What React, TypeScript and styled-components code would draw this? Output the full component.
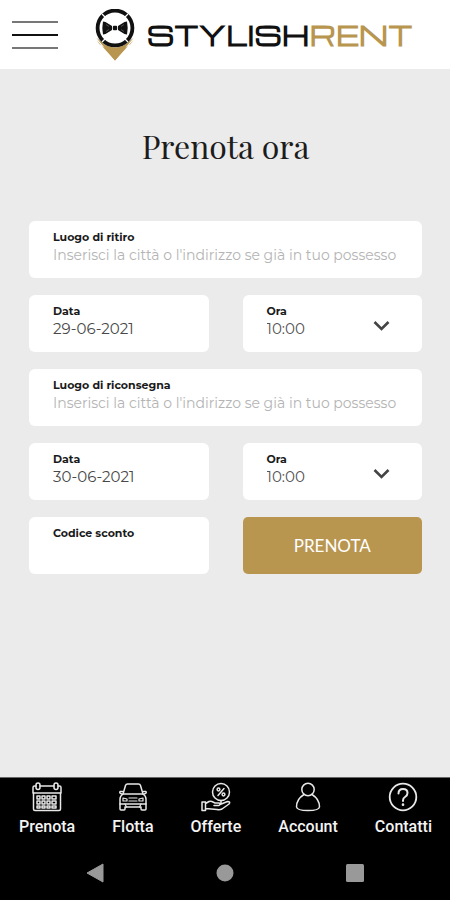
import React, { useId } from "react";
import styled, { createGlobalStyle } from "styled-components";

const GOLD = "#b99650";

const GlobalStyle = createGlobalStyle`
  *, *::before, *::after { box-sizing: border-box; }
  body { margin: 0; background: #ebebeb; font-family: Lato, sans-serif; }
  button, input, select { font: inherit; color: inherit; margin: 0; padding: 0; border: 0; background: none; }
  button { cursor: pointer; }
  svg { display: block; }
`;

const Page = styled.div`
  min-height: 100vh;
  display: flex;
  flex-direction: column;
`;

const Header = styled.header`
  display: flex;
  align-items: center;
  min-height: 69px;
  padding: 0 12px;
  gap: 37px;
  background: #fff;
`;

const MenuButton = styled.button`
  display: grid;
  gap: 11px;
  width: 46px;
  flex: none;
`;

const MenuLine = styled.span<{ $dark?: boolean }>`
  height: 2px;
  background: ${(p) => (p.$dark ? "#111" : "#777")};
`;

const Brand = styled.a`
  display: flex;
  align-items: center;
  gap: 12px;
  text-decoration: none;
`;

const Wordmark = styled.span`
  font: 700 26px/44px Michroma, "DejaVu Sans", sans-serif;
  color: #111;
`;

const WordmarkAccent = styled.span`
  color: ${GOLD};
`;

const Main = styled.main`
  flex: 1;
  padding: 54px 28px 40px 29px;
`;

const Title = styled.h1`
  margin: 0 0 52px;
  text-align: center;
  font: 400 32px/46px "Playfair Display", "Liberation Serif", serif;
  color: #1c1c1c;
`;

const Form = styled.form`
  display: grid;
  grid-template-columns: 1fr 1fr;
  gap: 17px 34px;
`;

const FieldBox = styled.div<{ $wide?: boolean }>`
  position: relative;
  display: flex;
  flex-direction: column;
  min-width: 0;
  min-height: 57px;
  padding: 8px 22px 12px 24px;
  border-radius: 6px;
  background: #fff;
  grid-column: ${(p) => (p.$wide ? "1 / -1" : "auto")};
`;

const Label = styled.label`
  font: 700 11px/16px Montserrat, "Open Sans", sans-serif;
  color: #1a1a1a;
`;

const TextInput = styled.input`
  width: 100%;
  height: 19px;
  font: 400 15px/19px Montserrat, Lato, sans-serif;
  color: #484848;
  outline: none;
  &::placeholder { font-size: 14px; color: #b4b4b4; opacity: 1; }
`;

const Select = styled.select`
  appearance: none;
  width: 100%;
  height: 19px;
  font: 400 15px/19px Montserrat, Lato, sans-serif;
  color: #555;
  outline: none;
`;

const Chevron = styled.svg`
  position: absolute;
  right: 32px;
  top: 25px;
  pointer-events: none;
`;

const Submit = styled.button`
  min-height: 57px;
  border-radius: 5px;
  background: ${GOLD};
  color: #fff;
  font-size: 17px;
`;

const Footer = styled.footer`
  background: #000;
  border-top: 1px solid #666;
`;

const Tabs = styled.nav`
  display: flex;
  justify-content: space-between;
  padding: 4px 18px 0 19px;
`;

const Tab = styled.a`
  display: flex;
  flex-direction: column;
  align-items: center;
  gap: 5px;
  font: 500 16px/20px Roboto, sans-serif;
  color: #f4f4f4;
  text-decoration: none;
`;

const SystemBar = styled.div`
  display: grid;
  grid-template-columns: repeat(3, 1fr);
  padding: 26px 30px 17px;
`;

const SystemButton = styled.button`
  display: flex;
  justify-content: center;
`;

function LogoMark() {
  return (
    <svg width="40" height="52" viewBox="0 0 40 52" aria-hidden="true">
      <path d="M1.500 29 Q20 44 38.500 29 L20 51.500 Z" fill={GOLD} />
      <circle cx="20" cy="19" r="19.500" fill="#fff" />
      <path d="M1.500 31 Q6 40 20 41 Q34 40 38.500 31 L20 51.500 Z" fill={GOLD} />
      <circle cx="20" cy="19" r="17.400" fill="none" stroke="#111" strokeWidth="3.800" />
      <path d="M7 5l3 3M33 5l-3 3M7 33l3-3M33 33l-3-3" stroke="#fff" strokeWidth="1.300" />
      <path d="M8 12.500 L10.500 13 L17 17 V21 L10.500 25 L8 25.500 Q6.600 19 8 12.500Z M32 12.500 L29.500 13 L23 17 V21 L29.500 25 L32 25.500 Q33.400 19 32 12.500Z" fill="#111" />
      <rect x="17.800" y="16.700" width="4.400" height="4.600" rx="1.200" fill="#111" />
      <path d="M11 15.500l3 2M11 22.500l3-2M29 15.500l-3 2M29 22.500l-3-2" stroke="#777" strokeWidth=".6" />
    </svg>
  );
}

function TabIcon({ children }: { children: React.ReactNode }) {
  return (
    <svg
      width="32"
      height="30"
      viewBox="0 0 32 30"
      fill="none"
      stroke="#e8e8e8"
      strokeWidth="1.5"
      strokeLinecap="round"
      strokeLinejoin="round"
      aria-hidden="true"
    >
      {children}
    </svg>
  );
}

const CalendarIcon = () => (
  <TabIcon>
    <path d="M5 4H3.500Q2 4 2 5.500V11H30V5.500Q30 4 28.500 4H27M9 4H23" />
    <rect x="5" y="1" width="4" height="6.500" rx="2" />
    <rect x="23" y="1" width="4" height="6.500" rx="2" />
    <path d="M2.500 11V27Q2.500 28.500 4 28.500H28Q29.500 28.500 29.500 27V11" />
    <path
      d="M11 14h3v3h-3zM16 14h3v3h-3zM21 14h4v3h-4zM6 14h3v3H6zM6 19h3v3H6zM11 19h3v3h-3zM16 19h3v3h-3zM21 19h4v3h-4zM6 24h3v2H6zM11 24h3v2h-3zM16 24h3v2h-3zM21 24h4v2h-4z"
      strokeWidth="1.500"
    />
  </TabIcon>
);

const CarIcon = () => (
  <TabIcon>
    <path d="M6 12L8.500 3.500Q9 2 10.500 2H21.500Q23 2 23.500 3.500L26 12" />
    <path d="M6 12Q3 14 3 17V22H29V17Q29 14 26 12ZM5.500 9.500H3Q2 11.500 5 12M26.500 9.500H29Q30 11.500 27 12" />
    <path d="M3 22V27Q3 28 4 28H7Q8 28 8 27V25H24V27Q24 28 25 28H28Q29 28 29 27V22" />
    <path d="M6 16L10 17V19H6ZM26 16L22 17V19H26ZM12 16H20M12 19H20M8 22L9.500 25M24 22L22.500 25" strokeWidth="1.200" />
  </TabIcon>
);

const OfferIcon = () => (
  <TabIcon>
    <circle cx="21" cy="10" r="8.500" />
    <path d="M24 6.500L18 13.500" />
    <circle cx="18.500" cy="7.500" r="1.400" />
    <circle cx="23.500" cy="12.500" r="1.400" />
    <path d="M2 20H5.500V28.500H2ZM5.500 21.500L9 19.500Q11 18.700 13 20L15 21H19Q21 22 19 23.500H14M20 22.500L27.500 19.500Q31 19.500 29 22L22 27Q20 28 17 27.500L5.500 26.500M21 18.500V21" />
  </TabIcon>
);

const AccountIcon = () => (
  <TabIcon>
    <circle cx="16" cy="7.500" r="6.200" />
    <path d="M12 12.500Q4.500 17 4.500 25Q5 28.500 16 28.500Q27 28.500 27.500 25Q27.500 17 20 12.500" />
  </TabIcon>
);

const HelpIcon = () => (
  <TabIcon>
    <circle cx="16" cy="15" r="13.300" strokeWidth="1.800" />
    <path d="M11.500 11.500Q11.500 7 16 7Q20.500 7 20.500 11Q20.500 13.500 18 15Q16 16.200 16 18.500V19" strokeWidth="2" />
    <circle cx="16" cy="22.700" r=".6" fill="#e8e8e8" />
  </TabIcon>
);

const tabs = [
  { label: "Prenota", Icon: CalendarIcon },
  { label: "Flotta", Icon: CarIcon },
  { label: "Offerte", Icon: OfferIcon },
  { label: "Account", Icon: AccountIcon },
  { label: "Contatti", Icon: HelpIcon },
];

interface FieldProps {
  label: string;
  value?: string;
  placeholder?: string;
  wide?: boolean;
}

function TextField({ label, value, placeholder, wide }: FieldProps) {
  const id = useId();
  return (
    <FieldBox $wide={wide}>
      <Label htmlFor={id}>{label}</Label>
      <TextInput id={id} type="text" defaultValue={value} placeholder={placeholder} />
    </FieldBox>
  );
}

function TimeField() {
  const id = useId();
  return (
    <FieldBox>
      <Label htmlFor={id}>Ora</Label>
      <Select id={id} defaultValue="10:00">
        <option>10:00</option>
      </Select>
      <Chevron width="17" height="12" viewBox="0 0 17 12" fill="none" stroke="#444" strokeWidth="2.600" aria-hidden="true">
        <path d="M1.500 2L8.500 9L15.500 2" />
      </Chevron>
    </FieldBox>
  );
}

const ADDRESS_HINT = "Inserisci la città o l'indirizzo se già in tuo possesso";

export default function App() {
  return (
    <Page>
      <GlobalStyle />
      <Header>
        <MenuButton type="button" aria-label="Menu">
          <MenuLine />
          <MenuLine $dark />
          <MenuLine />
        </MenuButton>
        <Brand href="#">
          <LogoMark />
          <Wordmark>
            STYLISH<WordmarkAccent>RENT</WordmarkAccent>
          </Wordmark>
        </Brand>
      </Header>
      <Main>
        <Title>Prenota ora</Title>
        <Form onSubmit={(e) => e.preventDefault()}>
          <TextField label="Luogo di ritiro" placeholder={ADDRESS_HINT} wide />
          <TextField label="Data" value="29-06-2021" />
          <TimeField />
          <TextField label="Luogo di riconsegna" placeholder={ADDRESS_HINT} wide />
          <TextField label="Data" value="30-06-2021" />
          <TimeField />
          <TextField label="Codice sconto" />
          <Submit type="submit">PRENOTA</Submit>
        </Form>
      </Main>
      <Footer>
        <Tabs>
          {tabs.map(({ label, Icon }) => (
            <Tab href="#" key={label}>
              <Icon />
              {label}
            </Tab>
          ))}
        </Tabs>
        <SystemBar>
          <SystemButton type="button" aria-label="Indietro">
            <svg width="20" height="20" viewBox="0 0 20 20">
              <path d="M18 1V19L2 10Z" fill="#999" stroke="#999" strokeLinejoin="round" />
            </svg>
          </SystemButton>
          <SystemButton type="button" aria-label="Home">
            <svg width="20" height="20" viewBox="0 0 20 20">
              <circle cx="10" cy="10" r="8.500" fill="#999" />
            </svg>
          </SystemButton>
          <SystemButton type="button" aria-label="Recenti">
            <svg width="20" height="20" viewBox="0 0 20 20">
              <rect x="1" y="1" width="18" height="18" rx="1.500" fill="#999" />
            </svg>
          </SystemButton>
        </SystemBar>
      </Footer>
    </Page>
  );
}
